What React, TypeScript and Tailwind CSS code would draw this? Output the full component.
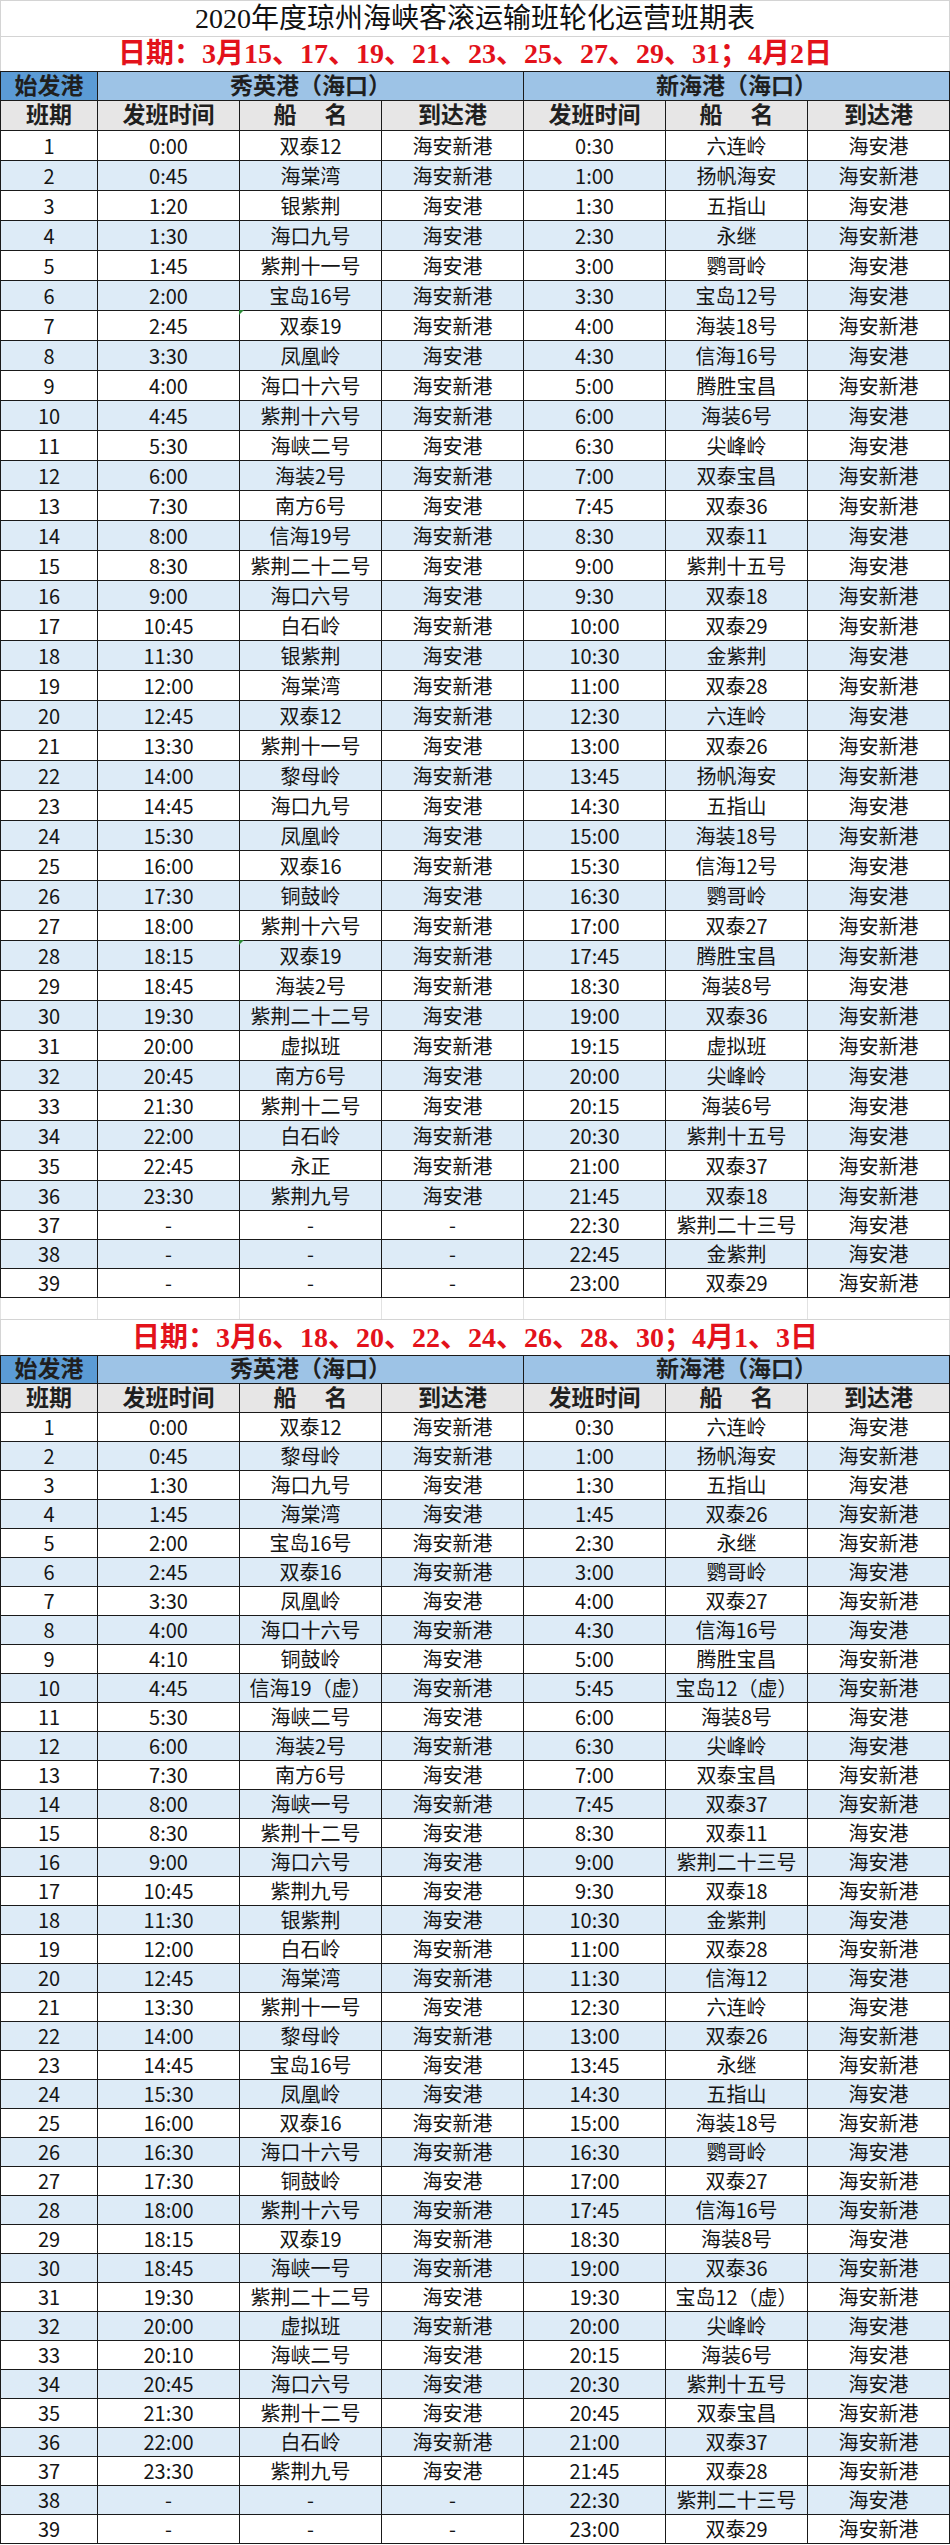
import type { ReactNode } from "react";

// ── Schedule data ───────────────────────────────────────────────────────────

type Trip = [string, string, string];
type Line = [Trip, Trip];

const DASH: Trip = ["-", "-", "-"];

const tableA: Line[] = [
  [["0:00", "双泰12", "海安新港"], ["0:30", "六连岭", "海安港"]],
  [["0:45", "海棠湾", "海安新港"], ["1:00", "扬帆海安", "海安新港"]],
  [["1:20", "银紫荆", "海安港"], ["1:30", "五指山", "海安港"]],
  [["1:30", "海口九号", "海安港"], ["2:30", "永继", "海安新港"]],
  [["1:45", "紫荆十一号", "海安港"], ["3:00", "鹦哥岭", "海安港"]],
  [["2:00", "宝岛16号", "海安新港"], ["3:30", "宝岛12号", "海安港"]],
  [["2:45", "双泰19", "海安新港"], ["4:00", "海装18号", "海安新港"]],
  [["3:30", "凤凰岭", "海安港"], ["4:30", "信海16号", "海安港"]],
  [["4:00", "海口十六号", "海安新港"], ["5:00", "腾胜宝昌", "海安新港"]],
  [["4:45", "紫荆十六号", "海安新港"], ["6:00", "海装6号", "海安港"]],
  [["5:30", "海峡二号", "海安港"], ["6:30", "尖峰岭", "海安港"]],
  [["6:00", "海装2号", "海安新港"], ["7:00", "双泰宝昌", "海安新港"]],
  [["7:30", "南方6号", "海安港"], ["7:45", "双泰36", "海安新港"]],
  [["8:00", "信海19号", "海安新港"], ["8:30", "双泰11", "海安港"]],
  [["8:30", "紫荆二十二号", "海安港"], ["9:00", "紫荆十五号", "海安港"]],
  [["9:00", "海口六号", "海安港"], ["9:30", "双泰18", "海安新港"]],
  [["10:45", "白石岭", "海安新港"], ["10:00", "双泰29", "海安新港"]],
  [["11:30", "银紫荆", "海安港"], ["10:30", "金紫荆", "海安港"]],
  [["12:00", "海棠湾", "海安新港"], ["11:00", "双泰28", "海安新港"]],
  [["12:45", "双泰12", "海安新港"], ["12:30", "六连岭", "海安港"]],
  [["13:30", "紫荆十一号", "海安港"], ["13:00", "双泰26", "海安新港"]],
  [["14:00", "黎母岭", "海安新港"], ["13:45", "扬帆海安", "海安新港"]],
  [["14:45", "海口九号", "海安港"], ["14:30", "五指山", "海安港"]],
  [["15:30", "凤凰岭", "海安港"], ["15:00", "海装18号", "海安新港"]],
  [["16:00", "双泰16", "海安新港"], ["15:30", "信海12号", "海安港"]],
  [["17:30", "铜鼓岭", "海安港"], ["16:30", "鹦哥岭", "海安港"]],
  [["18:00", "紫荆十六号", "海安新港"], ["17:00", "双泰27", "海安新港"]],
  [["18:15", "双泰19", "海安新港"], ["17:45", "腾胜宝昌", "海安新港"]],
  [["18:45", "海装2号", "海安新港"], ["18:30", "海装8号", "海安港"]],
  [["19:30", "紫荆二十二号", "海安港"], ["19:00", "双泰36", "海安新港"]],
  [["20:00", "虚拟班", "海安新港"], ["19:15", "虚拟班", "海安新港"]],
  [["20:45", "南方6号", "海安港"], ["20:00", "尖峰岭", "海安港"]],
  [["21:30", "紫荆十二号", "海安港"], ["20:15", "海装6号", "海安港"]],
  [["22:00", "白石岭", "海安新港"], ["20:30", "紫荆十五号", "海安港"]],
  [["22:45", "永正", "海安新港"], ["21:00", "双泰37", "海安新港"]],
  [["23:30", "紫荆九号", "海安港"], ["21:45", "双泰18", "海安新港"]],
  [DASH, ["22:30", "紫荆二十三号", "海安港"]],
  [DASH, ["22:45", "金紫荆", "海安港"]],
  [DASH, ["23:00", "双泰29", "海安新港"]],
];

const tableB: Line[] = [
  [["0:00", "双泰12", "海安新港"], ["0:30", "六连岭", "海安港"]],
  [["0:45", "黎母岭", "海安新港"], ["1:00", "扬帆海安", "海安新港"]],
  [["1:30", "海口九号", "海安港"], ["1:30", "五指山", "海安港"]],
  [["1:45", "海棠湾", "海安港"], ["1:45", "双泰26", "海安新港"]],
  [["2:00", "宝岛16号", "海安新港"], ["2:30", "永继", "海安新港"]],
  [["2:45", "双泰16", "海安新港"], ["3:00", "鹦哥岭", "海安港"]],
  [["3:30", "凤凰岭", "海安港"], ["4:00", "双泰27", "海安新港"]],
  [["4:00", "海口十六号", "海安新港"], ["4:30", "信海16号", "海安港"]],
  [["4:10", "铜鼓岭", "海安港"], ["5:00", "腾胜宝昌", "海安新港"]],
  [["4:45", "信海19（虚）", "海安新港"], ["5:45", "宝岛12（虚）", "海安新港"]],
  [["5:30", "海峡二号", "海安港"], ["6:00", "海装8号", "海安港"]],
  [["6:00", "海装2号", "海安新港"], ["6:30", "尖峰岭", "海安港"]],
  [["7:30", "南方6号", "海安港"], ["7:00", "双泰宝昌", "海安新港"]],
  [["8:00", "海峡一号", "海安新港"], ["7:45", "双泰37", "海安新港"]],
  [["8:30", "紫荆十二号", "海安港"], ["8:30", "双泰11", "海安港"]],
  [["9:00", "海口六号", "海安港"], ["9:00", "紫荆二十三号", "海安港"]],
  [["10:45", "紫荆九号", "海安港"], ["9:30", "双泰18", "海安新港"]],
  [["11:30", "银紫荆", "海安港"], ["10:30", "金紫荆", "海安港"]],
  [["12:00", "白石岭", "海安新港"], ["11:00", "双泰28", "海安新港"]],
  [["12:45", "海棠湾", "海安新港"], ["11:30", "信海12", "海安港"]],
  [["13:30", "紫荆十一号", "海安港"], ["12:30", "六连岭", "海安港"]],
  [["14:00", "黎母岭", "海安新港"], ["13:00", "双泰26", "海安新港"]],
  [["14:45", "宝岛16号", "海安港"], ["13:45", "永继", "海安新港"]],
  [["15:30", "凤凰岭", "海安港"], ["14:30", "五指山", "海安港"]],
  [["16:00", "双泰16", "海安新港"], ["15:00", "海装18号", "海安新港"]],
  [["16:30", "海口十六号", "海安新港"], ["16:30", "鹦哥岭", "海安港"]],
  [["17:30", "铜鼓岭", "海安港"], ["17:00", "双泰27", "海安新港"]],
  [["18:00", "紫荆十六号", "海安新港"], ["17:45", "信海16号", "海安新港"]],
  [["18:15", "双泰19", "海安新港"], ["18:30", "海装8号", "海安港"]],
  [["18:45", "海峡一号", "海安新港"], ["19:00", "双泰36", "海安新港"]],
  [["19:30", "紫荆二十二号", "海安港"], ["19:30", "宝岛12（虚）", "海安新港"]],
  [["20:00", "虚拟班", "海安新港"], ["20:00", "尖峰岭", "海安港"]],
  [["20:10", "海峡二号", "海安港"], ["20:15", "海装6号", "海安港"]],
  [["20:45", "海口六号", "海安港"], ["20:30", "紫荆十五号", "海安港"]],
  [["21:30", "紫荆十二号", "海安港"], ["20:45", "双泰宝昌", "海安新港"]],
  [["22:00", "白石岭", "海安新港"], ["21:00", "双泰37", "海安新港"]],
  [["23:30", "紫荆九号", "海安港"], ["21:45", "双泰28", "海安新港"]],
  [DASH, ["22:30", "紫荆二十三号", "海安港"]],
  [DASH, ["23:00", "双泰29", "海安新港"]],
];

// ── Layout bits ─────────────────────────────────────────────────────────────

const GRID = "grid grid-cols-[98px_repeat(6,142px)]";
const HEAD_FONT = "font-['Liberation_Serif','Noto_Sans_CJK_SC',serif]";
const BODY_FONT = "font-['Noto_Sans_CJK_SC','Noto_Sans',sans-serif]";

function Cell({ children, first, mark }: { children?: ReactNode; first?: boolean; mark?: boolean }) {
  return (
    <div
      className={`relative flex items-center justify-center border-r border-b border-[#1a1a1a] ${first ? "border-l" : ""}`}
    >
      {mark && (
        <span className="absolute -left-px -top-px h-0 w-0 border-t-[5px] border-r-[5px] border-t-[#2e8b3a] border-r-transparent" />
      )}
      {children}
    </div>
  );
}

function ShipName() {
  return (
    <span className="flex gap-[28px]">
      <span>船</span>
      <span>名</span>
    </span>
  );
}

function TableHead({ h }: { h: string }) {
  return (
    <>
      <div className={`${GRID} ${h} ${HEAD_FONT} text-[23px] font-bold text-[#1f1f1f] leading-none`}>
        <div className="flex items-center justify-center border border-[#1a1a1a] bg-[#5b9bd5]">始发港</div>
        <div className="col-span-3 flex items-center justify-center border-t border-r border-b border-[#1a1a1a] bg-[#9dc3e6]">
          秀英港（海口）
        </div>
        <div className="col-span-3 flex items-center justify-center border-t border-r border-b border-[#1a1a1a] bg-[#9dc3e6]">
          新海港（海口）
        </div>
      </div>
      <div className={`${GRID} ${h} ${HEAD_FONT} text-[23px] font-bold text-[#1f1f1f] leading-none bg-[#e7e6e6]`}>
        <Cell first>班期</Cell>
        <Cell>发班时间</Cell>
        <Cell><ShipName /></Cell>
        <Cell>到达港</Cell>
        <Cell>发班时间</Cell>
        <Cell><ShipName /></Cell>
        <Cell>到达港</Cell>
      </div>
    </>
  );
}

function Schedule({ rows, heights, marks = [] }: { rows: Line[]; heights: (i: number) => string; marks?: number[] }) {
  return (
    <div className={`${BODY_FONT} text-[20px] leading-none text-[#141414]`}>
      {rows.map(([a, b], i) => (
        <div key={i} className={`${GRID} ${heights(i)} ${i % 2 === 1 ? "bg-[#ddebf7]" : "bg-white"}`}>
          <Cell first>{i + 1}</Cell>
          <Cell>{a[0]}</Cell>
          <Cell mark={marks.includes(i)}>{a[1]}</Cell>
          <Cell>{a[2]}</Cell>
          <Cell>{b[0]}</Cell>
          <Cell>{b[1]}</Cell>
          <Cell>{b[2]}</Cell>
        </div>
      ))}
    </div>
  );
}

function DateLine({ text, h }: { text: string; h: string }) {
  return (
    <div
      className={`${h} flex items-center justify-center border-x border-[#d4d4d4] ${HEAD_FONT} text-[28px] font-bold leading-none text-[#e3121b]`}
    >
      {text}
    </div>
  );
}

export default function App() {
  return (
    <div className="w-[950px] bg-white">
      <div
        className={`h-[37px] flex items-center justify-center border border-[#d4d4d4] ${HEAD_FONT} text-[28px] leading-none text-[#111]`}
      >
        2020年度琼州海峡客滚运输班轮化运营班期表
      </div>
      <DateLine h="h-[34px]" text="日期：3月15、17、19、21、23、25、27、29、31；4月2日" />
      <TableHead h="h-[30px]" />
      <Schedule rows={tableA} heights={i => (i < 36 ? "h-[30px]" : "h-[29px]")} marks={[6, 27]} />

      {/* empty spreadsheet row between the two blocks */}
      <div className={`${GRID} h-[22px] border-b border-[#d4d4d4]`}>
        {Array.from({ length: 7 }).map((_, i) => (
          <div key={i} className={`border-r border-[#e2e2e2] ${i === 0 ? "border-l" : ""}`} />
        ))}
      </div>

      <DateLine h="h-[35px]" text="日期：3月6、18、20、22、24、26、28、30；4月1、3日" />
      <TableHead h="h-[29px]" />
      <Schedule rows={tableB} heights={() => "h-[29px]"} />
    </div>
  );
}
